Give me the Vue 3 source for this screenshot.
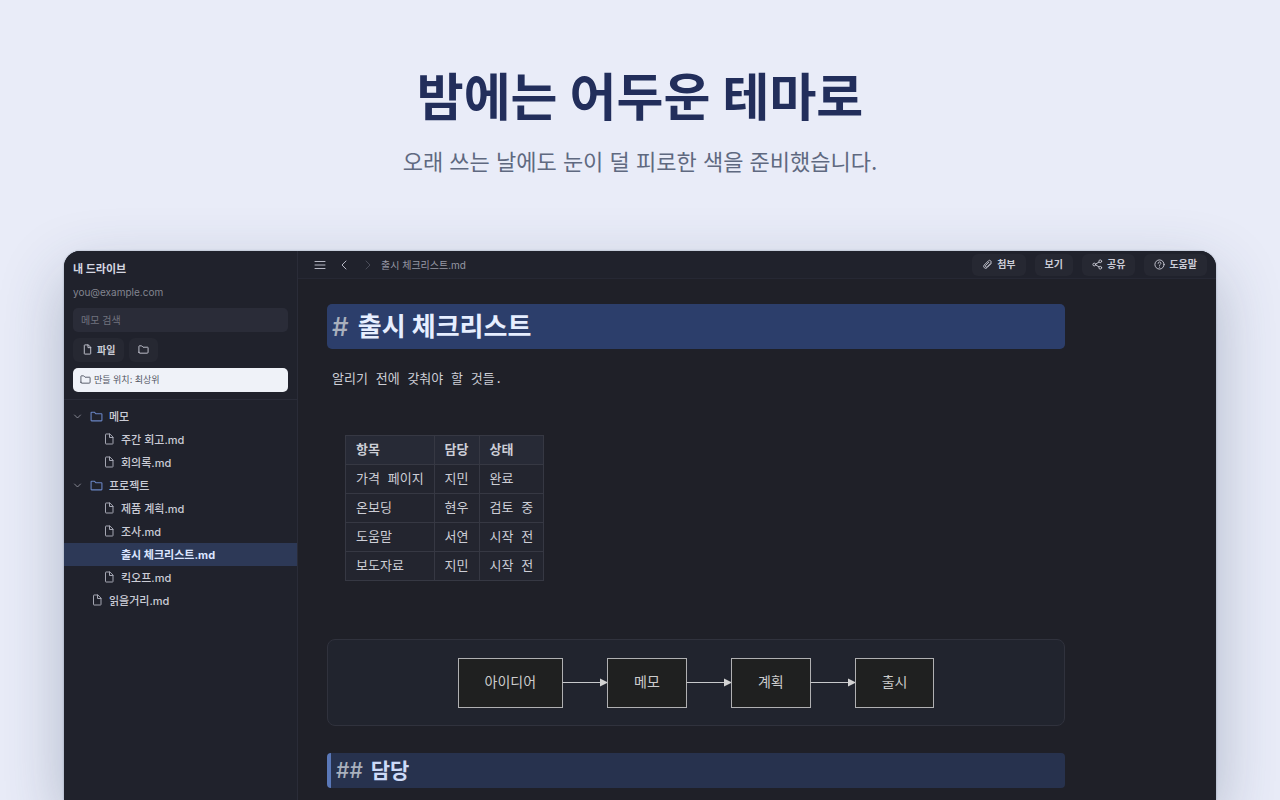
<template>
  <div class="page">
    <header class="hero">
      <h1>밤에는 어두운 테마로</h1>
      <p>오래 쓰는 날에도 눈이 덜 피로한 색을 준비했습니다.</p>
    </header>

    <div class="window">
      <aside class="sidebar">
        <div class="side-head">
          <div class="drive">내 드라이브</div>
          <div class="email">you@example.com</div>
          <input class="search" type="text" placeholder="메모 검색" aria-label="메모 검색" v-model="query" />
          <div class="side-actions">
            <button class="btn">
              <svg class="ico" viewBox="0 0 24 24"><path d="M13 2H6a1 1 0 0 0-1 1v18a1 1 0 0 0 1 1h12a1 1 0 0 0 1-1V8z" /><path d="M13 2v6h6" /></svg>
              파일
            </button>
            <button class="btn" aria-label="폴더">
              <svg class="ico" viewBox="0 0 24 24"><path d="M2 18V5a1 1 0 0 1 1-1h5l3 3h10a1 1 0 0 1 1 1v10a2 2 0 0 1-2 2H4a2 2 0 0 1-2-2z" /></svg>
            </button>
          </div>
          <button class="target">
            <svg class="ico" viewBox="0 0 24 24"><path d="M2 18V5a1 1 0 0 1 1-1h5l3 3h10a1 1 0 0 1 1 1v10a2 2 0 0 1-2 2H4a2 2 0 0 1-2-2z" /></svg>
            만들 위치: 최상위
          </button>
        </div>

        <nav class="tree">
          <a
            v-for="n in nodes"
            :key="n.name"
            href="#"
            class="row"
            :class="[n.type, { nested: n.nested, active: n.name === current }]"
            @click.prevent="select(n)"
          >
            <svg v-if="n.type === 'folder'" class="caret" viewBox="0 0 24 24"><path d="M4 8l8 8 8-8" /></svg>
            <svg v-if="n.type === 'folder'" class="folder-ico" viewBox="0 0 24 24"><path d="M2 19V5a1 1 0 0 1 1-1h5l3 3h10a1 1 0 0 1 1 1v11a1 1 0 0 1-1 1H3a1 1 0 0 1-1-1z" /></svg>
            <svg v-else class="file-ico" viewBox="0 0 24 24"><path d="M13 2H6a1 1 0 0 0-1 1v18a1 1 0 0 0 1 1h13a1 1 0 0 0 1-1V9z" /><path d="M13 2v7h7" /></svg>
            <span>{{ n.name }}</span>
          </a>
        </nav>
      </aside>

      <main class="main">
        <div class="topbar">
          <button class="nav-btn" aria-label="메뉴">
            <svg viewBox="0 0 24 24"><path d="M2 5h20M2 12h20M2 19h20" /></svg>
          </button>
          <button class="nav-btn" aria-label="뒤로">
            <svg viewBox="0 0 24 24"><path d="M16 4l-8 8 8 8" /></svg>
          </button>
          <button class="nav-btn" aria-label="앞으로" disabled>
            <svg viewBox="0 0 24 24"><path d="M8 4l8 8-8 8" /></svg>
          </button>
          <span class="crumb">{{ current }}</span>
          <div class="tools">
            <button class="btn">
              <svg class="ico" viewBox="0 0 24 24"><path d="M20 10l-9 9a4 4 0 0 1-6-6l9-9a3 3 0 0 1 5 5l-8 8a2 2 0 0 1-3-3l7-7" /></svg>
              첨부
            </button>
            <button class="btn">보기</button>
            <button class="btn">
              <svg class="ico" viewBox="0 0 24 24"><circle cx="5" cy="12" r="3" /><circle cx="18" cy="5" r="3" /><circle cx="18" cy="19" r="3" /><path d="M8 11l7-4M8 13l7 4" /></svg>
              공유
            </button>
            <button class="btn">
              <svg class="ico" viewBox="0 0 24 24"><circle cx="12" cy="12" r="10" /><path d="M9 9.500a3 3 0 1 1 4.500 2.500c-1 .6-1.500 1-1.500 2M12 17.500v.5" /></svg>
              도움말
            </button>
          </div>
        </div>

        <article class="doc">
          <h2 class="h1"><span class="mark">#</span> 출시 체크리스트</h2>
          <p class="para">알리기 전에 갖춰야 할 것들.</p>
          <table class="grid">
            <thead>
              <tr><th v-for="h in head" :key="h">{{ h }}</th></tr>
            </thead>
            <tbody>
              <tr v-for="r in rows" :key="r[0]">
                <td v-for="(c, i) in r" :key="i">{{ c }}</td>
              </tr>
            </tbody>
          </table>
          <div class="diagram">
            <template v-for="(s, i) in steps" :key="s">
              <svg v-if="i > 0" class="arrow" viewBox="0 0 44 10"><path class="line" d="M0 4.500h38" /><path class="tip" d="M37 .5l8 4-8 4z" /></svg>
              <div class="step">{{ s }}</div>
            </template>
          </div>
          <h3 class="h2"><span class="mark">##</span> 담당</h3>
        </article>
      </main>
    </div>
  </div>
</template>

<script setup>
import { ref } from 'vue'

const query = ref('')
const current = ref('출시 체크리스트.md')

const nodes = [
  { name: '메모', type: 'folder' },
  { name: '주간 회고.md', type: 'file', nested: true },
  { name: '회의록.md', type: 'file', nested: true },
  { name: '프로젝트', type: 'folder' },
  { name: '제품 계획.md', type: 'file', nested: true },
  { name: '조사.md', type: 'file', nested: true },
  { name: '출시 체크리스트.md', type: 'file', nested: true },
  { name: '킥오프.md', type: 'file', nested: true },
  { name: '읽을거리.md', type: 'file' }
]

const head = ['항목', '담당', '상태']
const rows = [
  ['가격 페이지', '지민', '완료'],
  ['온보딩', '현우', '검토 중'],
  ['도움말', '서연', '시작 전'],
  ['보도자료', '지민', '시작 전']
]
const steps = ['아이디어', '메모', '계획', '출시']

function select(n) {
  if (n.type === 'file') current.value = n.name
}
</script>

<style>
body { background: #e9ecf8; }
</style>

<style scoped>
.page { min-height: 100vh; display: flex; flex-direction: column; overflow: hidden; box-sizing: border-box; padding: 0 64px; background: #e9ecf8; font-family: Inter, "Noto Sans CJK KR", sans-serif; }
.page * { box-sizing: border-box; }
.page svg { fill: none; stroke: currentColor; stroke-width: 2; stroke-linecap: round; stroke-linejoin: round; flex: none; }
button, input { font-family: inherit; border: 0; margin: 0; }
button { cursor: pointer; }

.hero { text-align: center; padding: 62px 0 73px; }
.hero h1 { margin: 0; font-size: 51px; line-height: 72px; font-weight: 700; color: #222e5b; }
.hero p { margin: 12px 0 0; font-size: 22px; line-height: 32px; color: #5f6980; }

.window { flex: 1; display: flex; border-radius: 16px 16px 0 0; overflow: hidden; background: #1f2028; box-shadow: 0 24px 64px rgba(40, 58, 92, 0.3), 0 0 2px rgba(40, 58, 92, 0.4); }

.sidebar { width: 234px; flex: none; background: #20222c; border-right: 1px solid #2a2c38; color: #cbccd6; }
.side-head { padding: 10px 9px 7px; border-bottom: 1px solid #2a2c38; display: flex; flex-direction: column; }
.drive { font-size: 11px; line-height: 16px; font-weight: 700; color: #d6d8e2; }
.email { font-size: 10px; line-height: 16px; margin: 7px 0 8px; color: #838590; }
.search { height: 24px; padding: 0 8px; border-radius: 5px; background: #2a2c38; color: #cbccd6; font-size: 10px; outline: 0; }
.search::placeholder { color: #71737f; opacity: 1; }
.side-actions { display: flex; gap: 5px; margin: 6px 0; }
.btn { display: flex; align-items: center; gap: 4px; height: 22px; padding: 0 10px 1px; border-radius: 6px; background: #262832; color: #cbccd6; font-size: 10px; line-height: 16px; font-weight: 600; }
.side-actions .btn { height: 24px; padding: 0 9px 1px; }
.ico { width: 11px; height: 11px; }
.target { display: flex; align-items: center; gap: 3px; height: 24px; padding: 0 7px 1px; border-radius: 5px; background: #eff2f8; color: #4f5361; font-size: 9px; text-align: left; }

.tree { padding: 5px 0; }
.row { display: flex; align-items: center; gap: 6px; height: 23px; padding: 0 0 1px 9px; color: #cbccd6; font-size: 11px; font-weight: 500; text-decoration: none; }
.row.file { padding-left: 27px; }
.row.file.nested { padding-left: 39px; }
.row.active { background: #2d3957; color: #dce6ff; font-weight: 700; }
.row.active .file-ico { visibility: hidden; }
.caret { width: 9px; height: 9px; margin-right: 2px; color: #a4a6b2; }
.folder-ico { width: 13px; height: 13px; color: #6985c4; }
.file-ico { width: 12px; height: 12px; color: #a4a6b2; }

.main { flex: 1; min-width: 0; }
.topbar { display: flex; align-items: center; height: 28px; padding: 0 9px 0 16px; background: #20222c; border-bottom: 1px solid #262834; }
.nav-btn { display: flex; padding: 0; margin-right: 12px; background: transparent; color: #b4b6c2; }
.nav-btn:disabled { color: #4a4c58; margin-right: 7px; }
.nav-btn svg { width: 12px; height: 12px; }
.crumb { font-size: 10px; color: #9698a4; }
.tools { display: flex; gap: 9px; margin-left: auto; }

.doc { max-width: 767px; padding: 25px 0 12px 29px; color: #cdced6; }
.h1, .h2 { margin: 0; font-weight: 700; }
.h1 { height: 45px; padding-left: 5px; border-radius: 5px; background: #2c3e6b; color: #e6eeff; font-size: 26px; line-height: 45px; }
.h2 { height: 35px; padding-left: 5px; border-left: 4px solid #5a78b8; border-radius: 4px; background: #27324e; color: #cddaf8; font-size: 21px; line-height: 35px; }
.mark { margin-right: 3px; font-weight: 500; color: #a9b0bd; }
.para { margin: 20px 5px 45px; font: 13px/21px "Liberation Mono", "Noto Sans CJK KR", monospace; }
.grid { margin: 0 0 58px 18px; border-collapse: collapse; background: #23252f; font: 13px/20px "Liberation Mono", "Noto Sans CJK KR", monospace; }
.grid th, .grid td { height: 29px; padding: 1px 10px 0; border: 1px solid #363843; text-align: left; }
.grid th { background: #272a36; font-weight: 700; }
.diagram { display: flex; justify-content: center; align-items: center; height: 87px; margin-bottom: 27px; border: 1px solid #30323d; border-radius: 8px; background: #21242e; }
.step { height: 50px; padding: 0 26px; border: 1px solid #b0b0b2; background: #1f2020; font-size: 14px; line-height: 46px; color: #cccccc; }
.page .arrow { width: 44px; height: 10px; overflow: visible; }
.page .arrow .line { stroke: #c8c9cc; stroke-width: 1; }
.page .arrow .tip { fill: #d3d3d3; stroke: none; }
</style>
